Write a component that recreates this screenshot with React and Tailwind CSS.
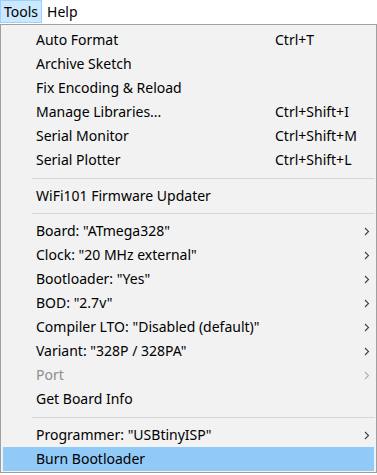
import React from "react";

const Chevron = ({ disabled }) => (
    <svg width="6" height="9" viewBox="0 0 6 9" className="ml-auto mr-[4px]">
        <polyline
            points="1,1 4.5,4.5 1,8"
            fill="none"
            stroke={disabled ? "#b0b0b0" : "#404040"}
            strokeWidth="1.1"
        />
    </svg>
);

const Item = ({ label, shortcut, sub, disabled, active }) => (
    <div
        className={`mx-[2px] h-[24px] flex items-center pl-[33px] ${active ? "bg-[#91c9f7]" : ""} ${disabled ? "text-[#8d8d8d]" : "text-black"}`}
    >
        <span className="w-[239px] shrink-0 whitespace-nowrap">{label}</span>
        {shortcut && <span className="whitespace-nowrap">{shortcut}</span>}
        {sub && <Chevron disabled={disabled} />}
    </div>
);

const Separator = ({ h }) => (
    <div className={`flex items-center pl-[31px] pr-[1px] ${h}`}>
        <div className="h-px w-full bg-[#d7d7d7]" />
    </div>
);

const App = () => {
    return (
        <div className="w-[377px] h-[475px] bg-white font-['Noto_Sans',sans-serif] text-[14px] leading-none text-black overflow-hidden">
            <div className="h-[24px] flex items-stretch">
                <div className="flex items-center px-[3px] bg-[#cce8ff] border border-[#99d1ff] h-[23px]">
                    Tools
                </div>
                <div className="flex items-center px-[5px] h-[23px]">Help</div>
            </div>
            <div className="h-[449px] border border-[#a0a0a0] bg-[#f2f2f2] pt-[3px]">
                <Item label="Auto Format" shortcut="Ctrl+T" />
                <Item label="Archive Sketch" />
                <Item label="Fix Encoding & Reload" />
                <Item label="Manage Libraries..." shortcut="Ctrl+Shift+I" />
                <Item label="Serial Monitor" shortcut="Ctrl+Shift+M" />
                <Item label="Serial Plotter" shortcut="Ctrl+Shift+L" />
                <Separator h="h-[12px]" />
                <Item label="WiFi101 Firmware Updater" />
                <Separator h="h-[11px]" />
                <Item label='Board: "ATmega328"' sub />
                <Item label='Clock: "20 MHz external"' sub />
                <Item label='Bootloader: "Yes"' sub />
                <Item label='BOD: "2.7v"' sub />
                <Item label='Compiler LTO: "Disabled (default)"' sub />
                <Item label='Variant: "328P / 328PA"' sub />
                <Item label="Port" sub disabled />
                <Item label="Get Board Info" />
                <Separator h="h-[12px]" />
                <Item label='Programmer: "USBtinyISP"' sub />
                <Item label="Burn Bootloader" active />
            </div>
        </div>
    );
};

export default App;
